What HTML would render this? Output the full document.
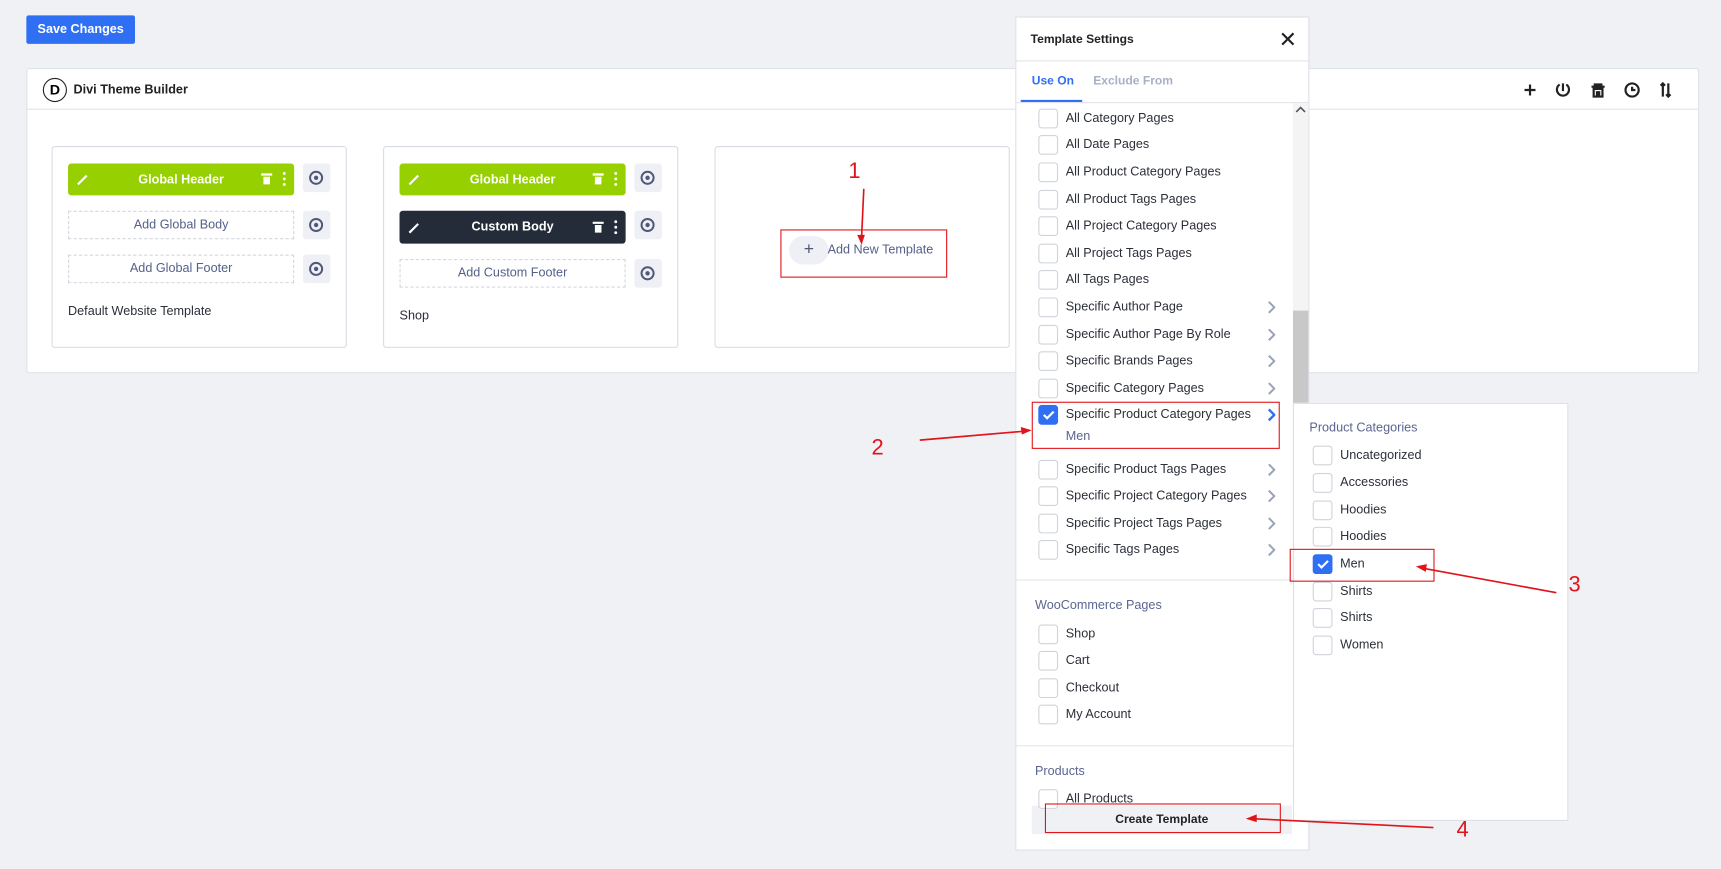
<!DOCTYPE html>
<html><head><meta charset="utf-8"><style>
*{box-sizing:border-box;margin:0;padding:0}
html,body{width:1721px;height:869px;overflow:hidden;background:#f0f1f5;font-family:"Liberation Sans",sans-serif}
#w{position:absolute;left:0;top:0;width:1568px;height:792px;transform:scale(1.09758);transform-origin:0 0}
.a{position:absolute}
.btn{left:24px;top:14px;width:99px;height:26px;background:#2f6ff3;border-radius:2px;color:#fff;font-weight:bold;font-size:11.5px;line-height:27px;text-align:center}
.panel{left:24px;top:62px;width:1524px;height:278px;background:#fff;border:1px solid #dfe2e8;border-radius:2px}
.card{top:133px;width:269px;height:184px;border:1px solid #d8dce3;border-radius:3px;background:#fff}
.bar{height:29px;border-radius:3px;color:#fff;font-size:11.5px;font-weight:bold;text-align:center;line-height:30px}
.dash{height:26px;border:1px dashed #d4d8df;color:#55608a;font-size:11.5px;text-align:center;line-height:25px}
.eye{width:25px;height:26px;background:#eef0f5;border-radius:3px}
.t{font-size:11.5px;color:#2b2f38}
.cb{width:18px;height:18px;border:1px solid #cfd3da;border-radius:3px;background:#fff}
.cbk{background:#2f6ff3;border-color:#2f6ff3}
.sec{font-size:11.5px;color:#5a6590}
.red{border:1.5px solid #e0141a}
.num{color:#e0141a;font-size:20px}
</style></head><body><div id="w">
<div class="a btn">Save Changes</div>
<div class="a panel">
 <div class="a" style="left:0;top:36px;width:1522px;height:1px;background:#dfe2e8"></div>
 <div class="a" style="left:14px;top:8px;width:22px;height:22px;border:1.8px solid #222;border-radius:50%;font-size:13px;font-weight:bold;text-align:center;line-height:19px">D</div>
 <div class="a" style="left:42px;top:13px;font-size:11.5px;font-weight:bold;color:#222">Divi Theme Builder</div>
 <svg class="a" style="left:1359px;top:10px" width="140" height="18" viewBox="0 0 140 18" fill="none" stroke="#222" stroke-width="2">
  <path d="M10 4v10M5 9h10"/>
  <path d="M37 4a5.5 5.5 0 1 0 6 0M40 3v7"/>
  <path d="M66 6h12M69 6v-2h6v2M68 8h8v7h-8z M71 10v4M73 10v4"/>
  <circle cx="103" cy="9" r="6"/><path d="M103 6v3h3"/>
  <path d="M131 3v12M129 5l2-2 2 2M136 3v12M134 13l2 2 2-2"/>
 </svg>
</div>
<!-- card1 -->
<div class="a card" style="left:47px"></div>
<div class="a bar" style="left:62px;top:149px;width:206px;background:#97d000">Global Header</div>
<div class="a eye" style="left:276px;top:149px"></div>
<div class="a dash" style="left:62px;top:192px;width:206px">Add Global Body</div>
<div class="a eye" style="left:276px;top:192px"></div>
<div class="a dash" style="left:62px;top:232px;width:206px">Add Global Footer</div>
<div class="a eye" style="left:276px;top:232px"></div>
<div class="a t" style="left:62px;top:278px">Default Website Template</div>
<!-- card2 -->
<div class="a card" style="left:349px"></div>
<div class="a bar" style="left:364px;top:149px;width:206px;background:#97d000">Global Header</div>
<div class="a eye" style="left:578px;top:149px"></div>
<div class="a bar" style="left:364px;top:192px;width:206px;height:30px;line-height:31px;background:#232c38">Custom Body</div>
<div class="a eye" style="left:578px;top:192px"></div>
<div class="a dash" style="left:364px;top:236px;width:206px">Add Custom Footer</div>
<div class="a eye" style="left:578px;top:236px"></div>
<div class="a t" style="left:364px;top:282px">Shop</div>
<svg class="a" style="left:0;top:0" width="620" height="270" fill="none">
 <g stroke="#fff" stroke-width="2"><path d="M71 168l8-8M373 168l8-8M373 212l8-8"/></g>
 <g fill="#fff"><path d="M238 158h10v2h-10zM240 161h6v7h-6z"/><circle cx="259" cy="158" r="1.3"/><circle cx="259" cy="163" r="1.3"/><circle cx="259" cy="168" r="1.3"/>
 <path d="M540 158h10v2h-10zM542 161h6v7h-6z"/><circle cx="561" cy="158" r="1.3"/><circle cx="561" cy="163" r="1.3"/><circle cx="561" cy="168" r="1.3"/>
 <path d="M540 202h10v2h-10zM542 205h6v7h-6z"/><circle cx="561" cy="202" r="1.3"/><circle cx="561" cy="207" r="1.3"/><circle cx="561" cy="212" r="1.3"/></g>
 <g stroke="#4f5878" stroke-width="1.8"><circle cx="288" cy="162" r="5.5"/><circle cx="288" cy="205" r="5.5"/><circle cx="288" cy="245" r="5.5"/><circle cx="590" cy="162" r="5.5"/><circle cx="590" cy="205" r="5.5"/><circle cx="590" cy="249" r="5.5"/></g>
 <g fill="#4f5878"><circle cx="288" cy="162" r="2"/><circle cx="288" cy="205" r="2"/><circle cx="288" cy="245" r="2"/><circle cx="590" cy="162" r="2"/><circle cx="590" cy="205" r="2"/><circle cx="590" cy="249" r="2"/></g>
</svg>
<!-- card3 -->
<div class="a" style="left:719px;top:215px;width:36px;height:26px;border-radius:13px;background:#eef0f5;color:#4f5878;font-size:16px;text-align:center;line-height:26px">+</div>
<div class="a" style="left:754px;top:222px;font-size:11.5px;color:#55608a">Add New Template</div>
<div class="a card" style="left:651px;background:transparent"></div>
<div class="a red" style="left:711px;top:209px;width:152px;height:44px"></div>
<!-- modal -->
<div class="a" style="left:925px;top:15px;width:268px;height:760px;background:#fff;border:1px solid #dcdfe6"></div>
<div class="a" style="left:939px;top:30px;font-size:11px;font-weight:bold;color:#222">Template Settings</div>
<div class="a" style="left:1165px;top:24px;font-size:20px;color:#222">✕</div>
<div class="a" style="left:925px;top:55px;width:268px;height:1px;background:#e3e5ea"></div>
<div class="a" style="left:940px;top:68px;font-size:11px;font-weight:bold;color:#2f6ff3">Use On</div>
<div class="a" style="left:996px;top:68px;font-size:11px;font-weight:bold;color:#a8b0c4">Exclude From</div>
<div class="a" style="left:930px;top:91px;width:56px;height:2px;background:#2f6ff3"></div>
<div class="a" style="left:926px;top:93px;width:266px;height:1px;background:#e3e5ea"></div>
<div class="a" style="left:1178px;top:94px;width:14px;height:430px;background:#f4f4f4"></div>
<div class="a" style="left:1178px;top:283px;width:14px;height:87px;background:#c8c8c8"></div>
<svg class="a" style="left:1180px;top:96px" width="10" height="8"><path d="M1 6l4-4 4 4" stroke="#555" stroke-width="1.5" fill="none"/></svg>
<div class="a" style="left:925px;top:528px;width:253px;height:1px;background:#e3e5ea"></div>
<div class="a" style="left:925px;top:679px;width:253px;height:1px;background:#e3e5ea"></div>
<div class="a sec" style="left:943px;top:546px">WooCommerce Pages</div>
<div class="a sec" style="left:943px;top:697px">Products</div>
<div class="a" style="left:940px;top:734px;width:237px;height:26px;background:#f0f1f4;font-size:11px;font-weight:bold;color:#222;text-align:center;line-height:27px">Create Template</div>
<!-- sub -->
<div class="a" style="left:1178px;top:367px;width:251px;height:381px;background:#fff;border:1px solid #dcdfe6"></div>
<div class="a sec" style="left:1193px;top:384px">Product Categories</div>
<div id="items"></div>
<div class="a red" style="left:940px;top:366px;width:226px;height:43px"></div>
<div class="a red" style="left:1175px;top:500px;width:132px;height:30px"></div>
<div class="a red" style="left:952px;top:732px;width:215px;height:27px"></div>
<div class="a num" style="left:773px;top:145px">1</div>
<div class="a num" style="left:794px;top:397px">2</div>
<div class="a num" style="left:1429px;top:522px">3</div>
<div class="a num" style="left:1327px;top:745px">4</div>
<svg class="a" style="left:0;top:0" width="1568" height="792" stroke="#e0141a" stroke-width="1.5" fill="#e0141a">
 <path d="M787 172L785 216" /><path d="M781 214l4 9 3-9z" stroke="none"/>
 <path d="M838 401L932 393"/><path d="M930 389l10 3-9 4z" stroke="none"/>
 <path d="M1418 540L1298 518"/><path d="M1300 514l-10 2 9 5z" stroke="none"/>
 <path d="M1306 754L1143 746"/><path d="M1145 742l-10 4 10 3z" stroke="none"/>
</svg>
</div>
<script>
var L=[["All Category Pages",108],["All Date Pages",132],["All Product Category Pages",157],["All Product Tags Pages",182],["All Project Category Pages",206],["All Project Tags Pages",231],["All Tags Pages",255],["Specific Author Page",280,1],["Specific Author Page By Role",305,1],["Specific Brands Pages",329,1],["Specific Category Pages",354,1],["Specific Product Category Pages",378,2,1],["Specific Product Tags Pages",428,1],["Specific Project Category Pages",452,1],["Specific Project Tags Pages",477,1],["Specific Tags Pages",501,1],["Shop",578],["Cart",602],["Checkout",627],["My Account",651],["All Products",728]];
var S=[["Uncategorized",415],["Accessories",440],["Hoodies",465],["Hoodies",489],["Men",514,0,1],["Shirts",539],["Shirts",563],["Women",588]];
var h="";
function add(a,cx,tx){var y=a[1];h+='<div class="a cb'+(a[3]?' cbk':'')+'" style="left:'+cx+'px;top:'+(y-9)+'px">'+(a[3]?'<svg width="16" height="16" style="position:absolute;left:0;top:0"><path d="M4 8l3 3 6-6" stroke="#fff" stroke-width="2" fill="none"/></svg>':'')+'</div><div class="a t" style="left:'+tx+'px;top:'+(y-6)+'px">'+a[0]+'</div>';
if(a[2])h+='<svg class="a" style="left:1154px;top:'+(y-6)+'px" width="8" height="12"><path d="M2 1l5 5-5 5" stroke="'+(a[2]==2?'#2f6ff3':'#9aa3b5')+'" stroke-width="'+(a[2]==2?2.2:1.8)+'" fill="none"/></svg>';}
L.forEach(function(a){add(a,946,971)});
h+='<div class="a t" style="left:971px;top:392px;color:#5a6590">Men</div>';
S.forEach(function(a){add(a,1196,1221)});
document.getElementById("items").innerHTML=h;
</script>
</body></html>
